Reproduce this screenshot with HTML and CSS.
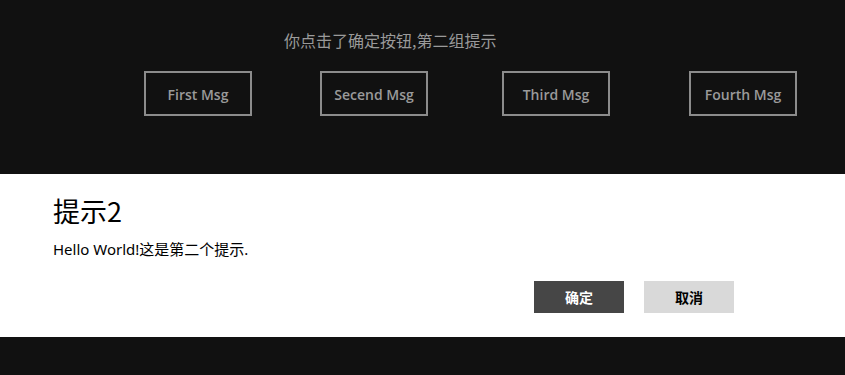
FILE: index.html
```html
<!DOCTYPE html>
<html lang="zh">
<head>
<meta charset="utf-8">
<link rel="stylesheet" href="styles.css">
</head>
<body>
<div class="top">
  <div class="status">你点击了确定按钮,第二组提示</div>
  <div class="msg-row">
    <button class="msg-btn b1">First Msg</button>
    <button class="msg-btn b2">Secend Msg</button>
    <button class="msg-btn b3">Third Msg</button>
    <button class="msg-btn b4">Fourth Msg</button>
  </div>
</div>
<div class="dialog">
  <div class="title">提示2</div>
  <div class="content">Hello World!这是第二个提示.</div>
  <div class="actions">
    <button class="act ok">确定</button>
    <button class="act cancel">取消</button>
  </div>
</div>
</body>
</html>
```
FILE: styles.css
```css
html, body {
  margin: 0;
  padding: 0;
  background: #111111;
  width: 845px;
  height: 375px;
  overflow: hidden;
  font-family: "Noto Sans", "Noto Sans CJK SC", sans-serif;
}
.top {
  height: 174px;
  box-sizing: border-box;
  padding-top: 29px;
}
.status {
  padding-left: 284px;
  color: #9a9a9a;
  font-size: 16px;
  line-height: 22px;
  height: 22px;
  font-family: "Noto Sans CJK SC", sans-serif;
}
.msg-row {
  display: flex;
  margin-top: 20px;
  padding-left: 144px;
}
.msg-btn {
  width: 108px;
  height: 45px;
  box-sizing: border-box;
  border: 2px solid #8c8c8c;
  background: transparent;
  color: #9a9a9a;
  font-family: "Open Sans", sans-serif;
  font-weight: 600;
  font-size: 14px;
  padding: 2px 0 0 0;
  margin: 0;
}
.b2 { margin-left: 68px; }
.b3 { margin-left: 74px; }
.b4 { margin-left: 79px; }
.dialog {
  background: #ffffff;
  height: 163px;
  box-sizing: border-box;
  padding: 19px 111px 0 53px;
}
.title {
  font-family: "Noto Sans CJK SC", sans-serif;
  font-size: 27px;
  line-height: 36px;
  color: #000;
}
.content {
  margin-top: 10px;
  font-family: "Noto Sans", "Noto Sans CJK SC", sans-serif;
  font-size: 15px;
  line-height: 20px;
  color: #000;
}
.actions {
  display: flex;
  justify-content: flex-end;
  gap: 20px;
  margin-top: 22px;
}
.act {
  width: 90px;
  height: 32px;
  border: none;
  padding: 0;
  font-family: "Noto Sans CJK SC", sans-serif;
  font-weight: 700;
  font-size: 14px;
}
.ok {
  background: #464646;
  color: #ffffff;
}
.cancel {
  background: #d9d9d9;
  color: #000000;
}
```
